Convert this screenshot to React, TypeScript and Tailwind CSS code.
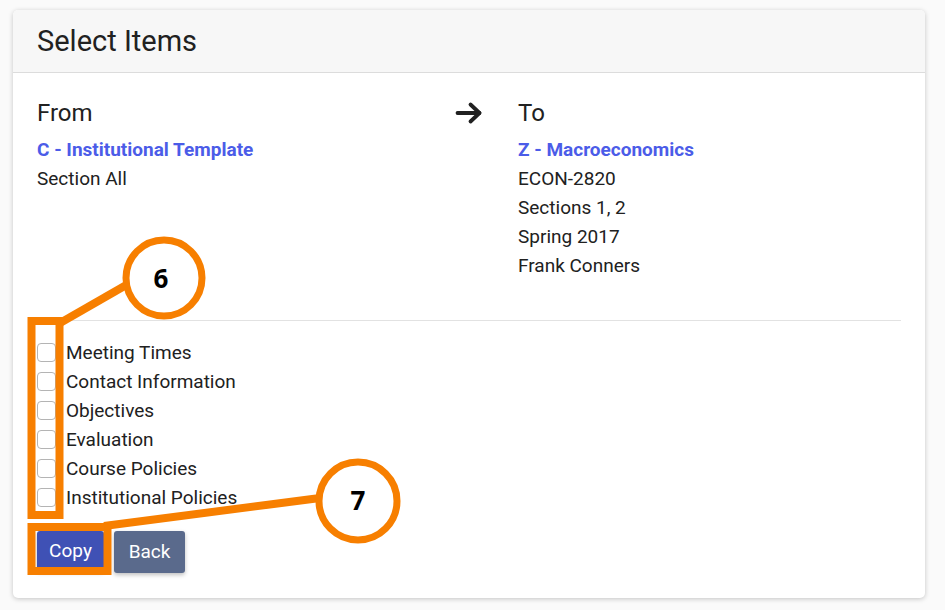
import React from 'react';

const fromLines = ['Section All'];
const toLines = ['ECON-2820', 'Sections 1, 2', 'Spring 2017', 'Frank Conners'];
const items = ['Meeting Times', 'Contact Information', 'Objectives', 'Evaluation', 'Course Policies', 'Institutional Policies'];

function ArrowRight() {
  return (
    <svg width="28" height="24" viewBox="0 0 28 24" fill="none" stroke="#212121" strokeWidth="3.8" strokeLinecap="round" strokeLinejoin="round">
      <path d="M2.5 12h22" />
      <path d="M15.5 3.5l9 8.5-9 8.5" />
    </svg>
  );
}

// callout marks drawn over the screenshot
function Callouts() {
  const orange = '#f77f00';
  return (
    <svg className="pointer-events-none absolute left-0 top-0" width="945" height="610" viewBox="0 0 945 610">
      <rect x="31.5" y="321" width="28" height="194" fill="none" stroke={orange} strokeWidth="8" />
      <line x1="60" y1="323" x2="128" y2="284" stroke={orange} strokeWidth="8" />
      <circle cx="164" cy="278" r="38" fill="#fff" stroke={orange} strokeWidth="7" />
      <text x="161" y="288" textAnchor="middle" fontFamily="'Open Sans', sans-serif" fontWeight="700" fontSize="26" fill="#000">6</text>

      <rect x="31.5" y="527" width="76" height="44" fill="none" stroke={orange} strokeWidth="8" />
      <line x1="104" y1="526" x2="320" y2="498" stroke={orange} strokeWidth="8" />
      <circle cx="358" cy="501" r="39" fill="#fff" stroke={orange} strokeWidth="7" />
      <text x="358" y="510" textAnchor="middle" fontFamily="'Open Sans', sans-serif" fontWeight="700" fontSize="26" fill="#000">7</text>
    </svg>
  );
}

export default function App() {
  return (
    <div className="relative h-[610px] w-[945px] overflow-hidden bg-[#fafafa] pl-[13px] pt-[10px] font-['Roboto',sans-serif] text-[#212121]">
      <div className="h-[588px] w-[912px] overflow-hidden rounded-[5px] bg-white shadow-[0_1px_5px_rgba(0,0,0,0.22)]">
        <div className="flex h-[63px] items-center border-b border-[#dcdcdc] bg-[#f7f7f7] px-6">
          <h1 className="text-[29px] leading-none">Select Items</h1>
        </div>

        <div className="px-6 pt-[24px]">
          <div className="flex">
            <div className="w-[418px]">
              <h2 className="text-[24px] leading-[32px]">From</h2>
              <div className="mt-[6px] text-[19px] leading-[29px]">
                <div className="font-bold text-[#4b5ce8]">C - Institutional Template</div>
                {fromLines.map(l => <div key={l}>{l}</div>)}
              </div>
            </div>
            <div className="flex w-[63px] pt-[4px]">
              <ArrowRight />
            </div>
            <div>
              <h2 className="text-[24px] leading-[32px]">To</h2>
              <div className="mt-[6px] text-[19px] leading-[29px]">
                <div className="font-bold text-[#4b5ce8]">Z - Macroeconomics</div>
                {toLines.map(l => <div key={l}>{l}</div>)}
              </div>
            </div>
          </div>

          <div className="mt-[40px] border-t border-[#e2e2e2]" />

          <div className="pt-[17px] text-[19px] leading-[29px]">
            {items.map(it => (
              <label key={it} className="flex items-center">
                <span className="mr-[10px] inline-block size-[19px] rounded-[4px] border border-[#b4b4b4] bg-white" />
                <span>{it}</span>
              </label>
            ))}
          </div>

          <div className="mt-[19px] flex gap-[10px]">
            <button className="h-[40px] w-[67px] rounded-[3px] bg-[#3f51b5] text-[19px] text-white shadow-[0_2px_4px_rgba(0,0,0,0.25)]">Copy</button>
            <button className="h-[42px] w-[71px] rounded-[3px] bg-[#5a6a8c] text-[19px] text-white shadow-[0_2px_4px_rgba(0,0,0,0.25)]">Back</button>
          </div>
        </div>
      </div>
      <Callouts />
    </div>
  );
}
